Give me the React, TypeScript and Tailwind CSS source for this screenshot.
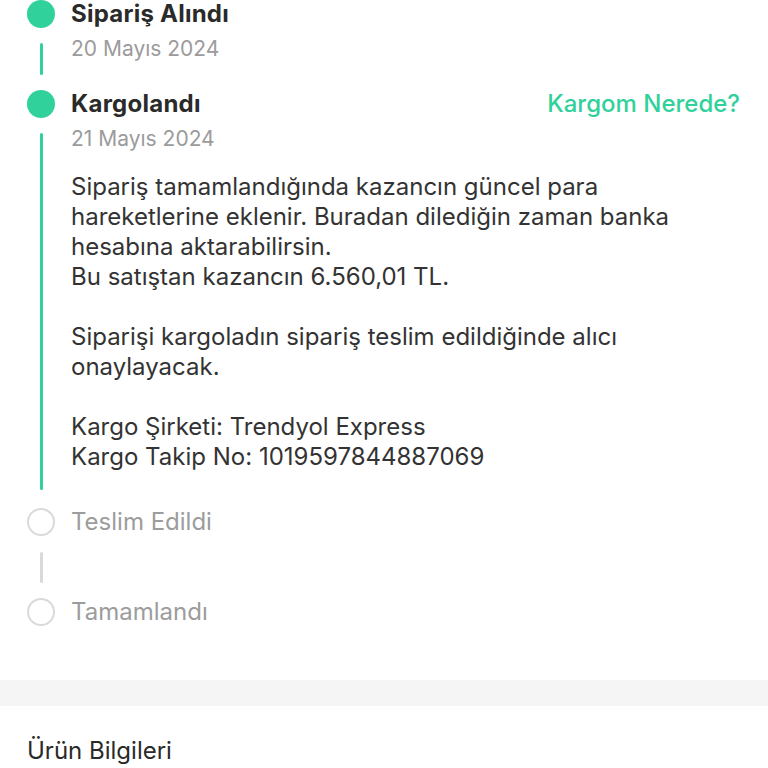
import React from 'react';

const GREEN = 'bg-[#30d19a]';

function Step({
	title,
	date,
	done,
	last,
	action,
	children,
	lineGap,
	padBottom,
}: {
	title: string;
	date?: string;
	done: boolean;
	last?: boolean;
	action?: string;
	children?: React.ReactNode;
	lineGap: string;
	padBottom: string;
}) {
	return (
		<div className="flex">
			{/* dot + connector */}
			<div className="w-[28px] flex flex-col items-center shrink-0">
				{done ? (
					<div className={`w-[28px] h-[28px] shrink-0 rounded-full ${GREEN}`} />
				) : (
					<div className="w-[28px] h-[28px] shrink-0 rounded-full border-2 border-[#dadada] bg-white" />
				)}
				{!last && (
					<div className={`w-[3px] flex-1 rounded-full ${lineGap} ${done ? GREEN : 'bg-[#d9d9d9]'}`} />
				)}
			</div>
			<div className={`flex-1 pl-[16px] ${padBottom}`}>
				<div className="h-[28px] flex items-center justify-between">
					<span className={done ? 'text-[24px] leading-[28px] font-bold tracking-[0.01em] text-[#2a2a2a]' : 'text-[24px] leading-[28px] text-[#9c9c9c]'}>{title}</span>
					{action && <span className="text-[24px] leading-[28px] font-medium text-[#30d19a] mr-[1px]">{action}</span>}
				</div>
				{date && <div className="mt-[6px] text-[21px] leading-[30px] text-[#9b9b9b]">{date}</div>}
				{children}
			</div>
		</div>
	);
}

export default function App() {
	return (
		<div className="w-[768px] h-[768px] overflow-hidden bg-white font-['Inter','Liberation_Sans',sans-serif]">
			<div className="px-[27px]">
				<Step title="Sipariş Alındı" date="20 Mayıs 2024" done lineGap="my-[15px]" padBottom="pb-[26px]" />
				<Step title="Kargolandı" date="21 Mayıs 2024" done action="Kargom Nerede?" lineGap="mt-[15px] mb-[18px]" padBottom="pb-[36px]">
					<div className="mt-[18px] text-[24px] leading-[30px] text-[#333333]">
						<p>Sipariş tamamlandığında kazancın güncel para hareketlerine eklenir. Buradan dilediğin zaman banka hesabına aktarabilirsin.</p>
						<p>Bu satıştan kazancın 6.560,01 TL.</p>
						<p className="mt-[30px]">Siparişi kargoladın sipariş teslim edildiğinde alıcı onaylayacak.</p>
						<p className="mt-[30px]">Kargo Şirketi: Trendyol Express</p>
						<p>Kargo Takip No: 1019597844887069</p>
					</div>
				</Step>
				<Step title="Teslim Edildi" done={false} lineGap="mt-[16px] mb-[15px]" padBottom="pb-[62px]" />
				<Step title="Tamamlandı" done={false} last lineGap="" padBottom="" />
			</div>
			<div className="mt-[54px] h-[26px] bg-[#f5f5f5]" />
			<div className="px-[27px] mt-[30px] text-[24px] leading-[30px] text-[#2a2a2a]">Ürün Bilgileri</div>
		</div>
	);
}
